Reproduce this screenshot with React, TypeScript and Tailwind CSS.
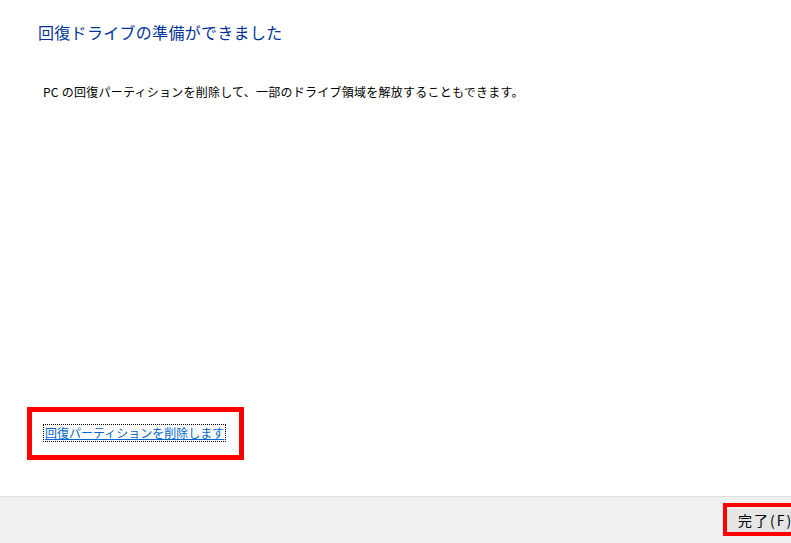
export default function App() {
  return (
    <div
      className="h-[543px] w-[791px] overflow-hidden bg-white flex flex-col text-black"
      style={{ fontFamily: '"Noto Sans CJK JP", "Noto Sans", sans-serif' }}
    >
      {/* Content */}
      <div className="flex-1 flex flex-col pt-[20px]">
        <h1 className="pl-[38px] text-[16px] leading-[24px] font-normal text-[#003399] tracking-[0.3px]">
          回復ドライブの準備ができました
        </h1>
        <p className="pl-[43px] mt-[40px] text-[12px] leading-[16px] tracking-[0.25px]">
          PC の回復パーティションを削除して、一部のドライブ領域を解放することもできます。
        </p>

        <div className="mt-auto mb-[36px] ml-[27px] self-start border-[5px] border-[#ff0000] pl-[11px] pr-[13px] pt-[12px] pb-[13px]">
          <a
            href="#"
            className="block border border-dotted border-black px-px text-[12px] leading-[16px] text-[#0066cc] underline"
          >
            回復パーティションを削除します
          </a>
        </div>
      </div>

      {/* Footer */}
      <div className="h-[47px] shrink-0 border-t border-[#dfdfdf] bg-[#f0f0f0] flex justify-end items-start pt-[6px] overflow-hidden">
        <div className="-mr-[24px] border-4 border-[#ff0000]">
          <button className="h-[23px] w-[84px] bg-[#e5e5e5] pl-[11px] text-left text-[14px] leading-[23px] tracking-[2px] text-black whitespace-nowrap">
            完了(F)
          </button>
        </div>
      </div>
    </div>
  );
}
